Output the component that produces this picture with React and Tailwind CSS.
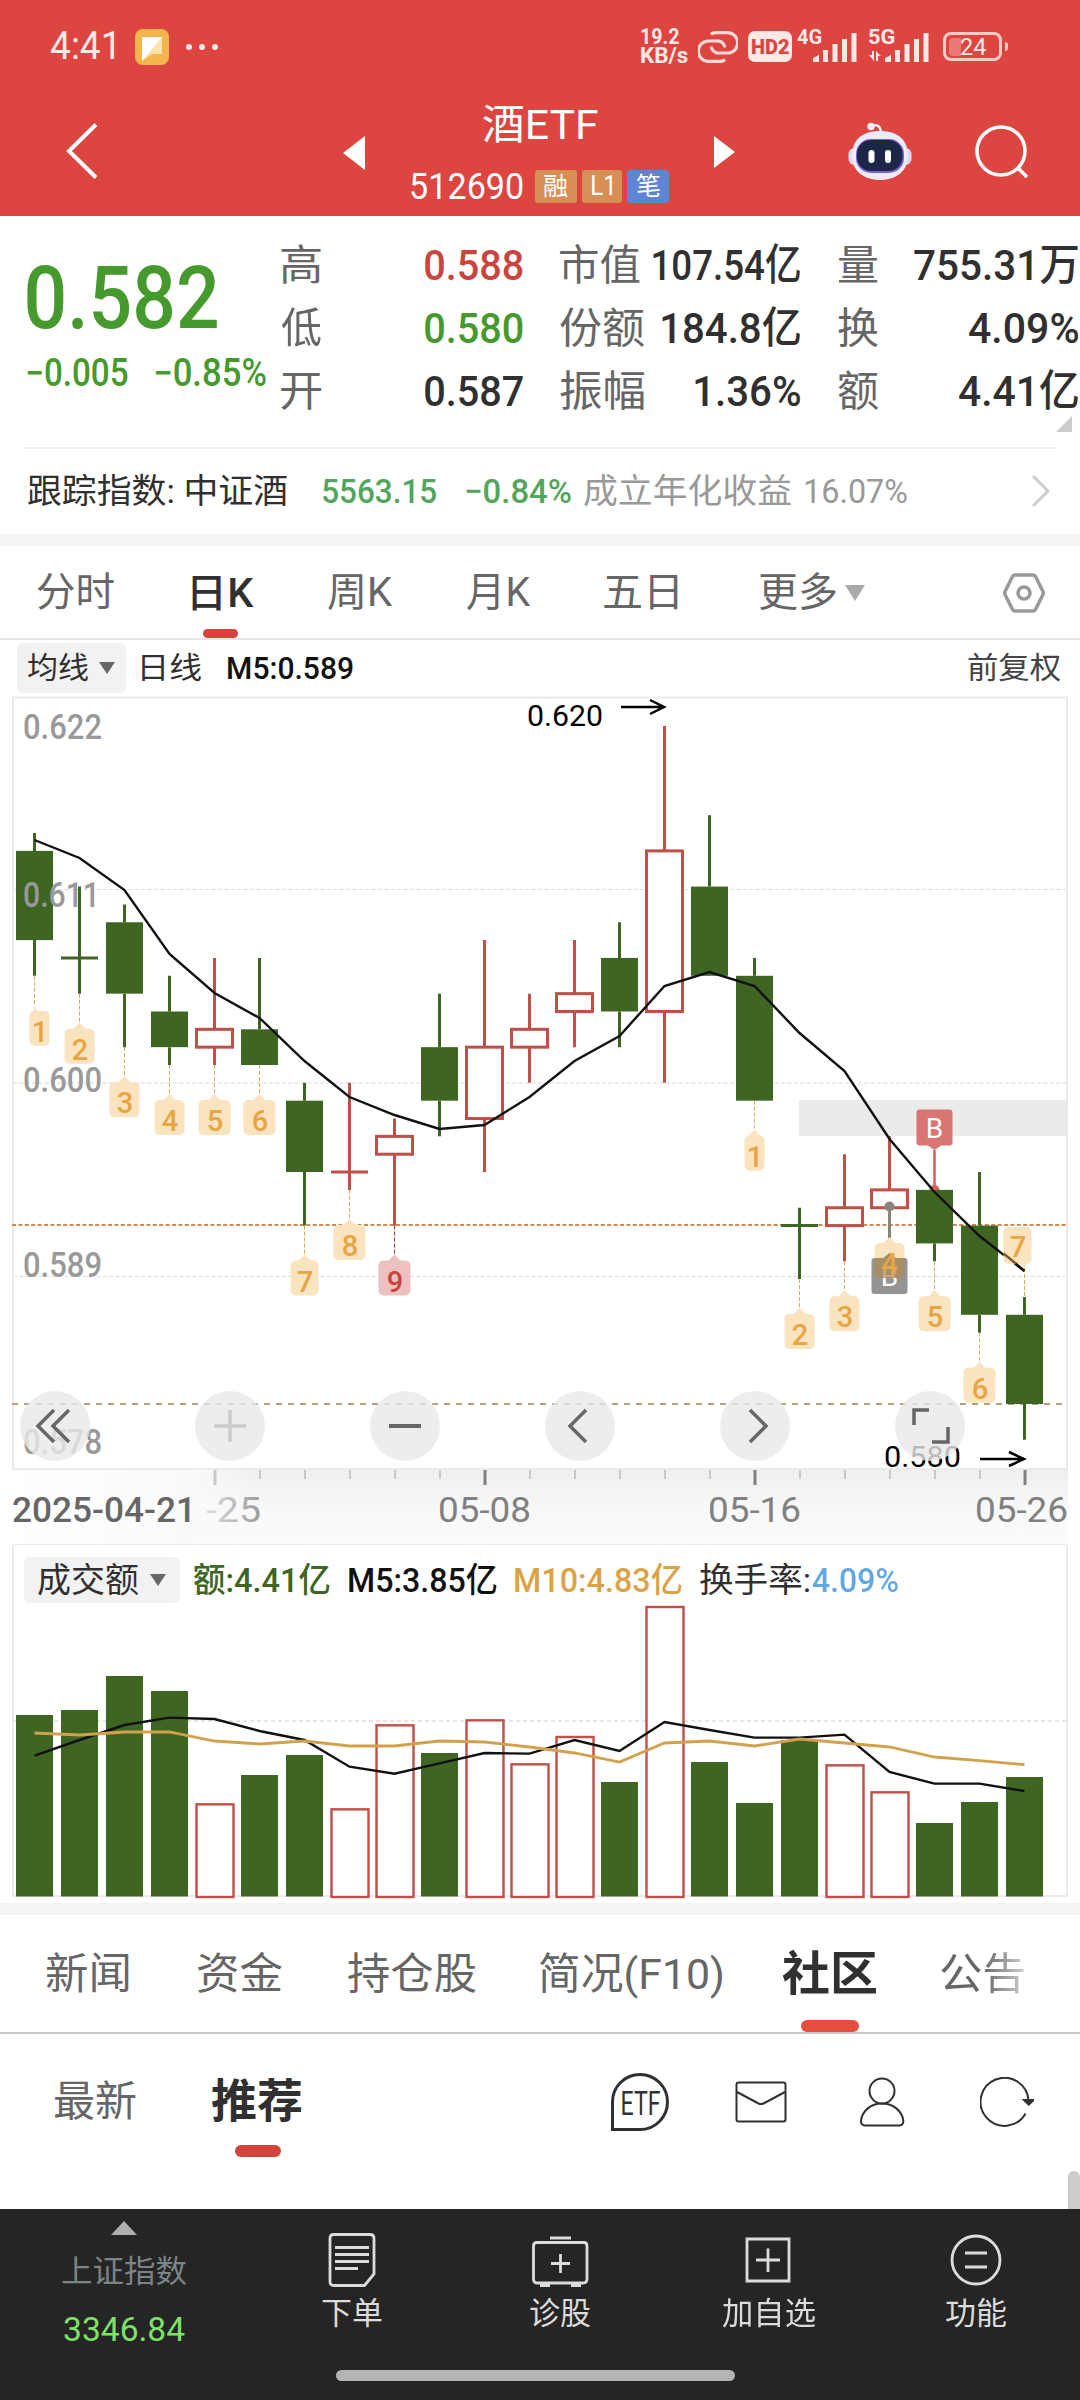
import React, { useLayoutEffect, useRef, useState } from "react";
import clsx from "clsx";

// text squeezed or stretched so that its ink is exactly w pixels wide
const Fit = ({ w, className, children }) => {
  const ref = useRef(null);
  const [style, setStyle] = useState({});

  useLayoutEffect(() => {
    const ctx = document.createElement("canvas").getContext("2d");
    ctx.font = getComputedStyle(ref.current).font;
    const m = ctx.measureText(children);
    const left = -m.actualBoundingBoxLeft;
    const scale = w / (m.actualBoundingBoxRight - left);
    setStyle({ transform: `translateX(${-left * scale}px) scaleX(${scale})` });
  }, [w, children]);

  return (
    <span className={clsx("block shrink-0 whitespace-nowrap leading-none", className)} style={{ width: w }}>
      <span ref={ref} className="inline-block origin-left" style={style}>
        {children}
      </span>
    </span>
  );
};

const GREEN = "#3f6522";
const RED = "#bf4f47";

// open, close, high, low in thousandths, then the turnover bar's top
const candles = [
  [613, 608, 614, 606, 375],
  [607, 607, 611, 605, 360],
  [609, 605, 610, 602, 258],
  [604, 602, 606, 601, 303],
  [602, 603, 607, 601, 640],
  [603, 601, 607, 601, 555],
  [599, 595, 600, 592, 495],
  [595, 595, 600, 594, 655, "up"],
  [596, 597, 598, 592, 403],
  [602, 599, 605, 597, 489],
  [598, 602, 608, 595, 388],
  [602, 603, 605, 600, 520],
  [604, 605, 608, 602, 438],
  [607, 604, 609, 602, 576],
  [604, 613, 620, 600, 48],
  [611, 606, 615, 606, 516],
  [606, 599, 607, 599, 639],
  [592, 592, 593, 589, 450],
  [592, 593, 596, 590, 523],
  [593, 594, 597, 593, 604],
  [594, 591, 594, 590, 699],
  [592, 587, 595, 586, 636],
  [587, 582, 588, 580, 561],
];

const ma5 = [840, 858, 890, 954, 993, 1018, 1061, 1097, 1115, 1129, 1125, 1097, 1061, 1036, 986, 972, 986, 1033, 1071, 1139, 1192, 1236, 1271];
const vol5 = [497, 450, 405, 383, 387, 423, 450, 530, 551, 520, 489, 491, 450, 483, 396, 420, 443, 443, 434, 546, 581, 581, 603];
const vol10 = [429, 435, 426, 426, 453, 462, 453, 468, 468, 453, 456, 471, 489, 516, 459, 453, 468, 447, 459, 471, 501, 512, 524];

// candle index -> running count
const counts = [[0, 1], [1, 2], [2, 3], [3, 4], [4, 5], [5, 6], [6, 7], [7, 8], [8, 9], [16, 1], [17, 2], [18, 3], [20, 5], [21, 6]];

const cx = (i) => 34.5 + i * 45;
const py = (p) => 726 + (620 - p) * 17.842;
const vy = (v) => 1590 + v / 3;
const line = (pts) => pts.map((y, i) => `${cx(i)},${y}`).join(" ");

const Label = ({ x, y, w, size = 35, fill = "#999", weight = 500, children }) => (
  <text x={x} y={y} fontSize={size} fill={fill} fontWeight={weight} textLength={w} lengthAdjust="spacingAndGlyphs">
    {children}
  </text>
);

const Candle = ({ i, d }) => {
  const [o, c, h, l, , dir] = d;
  const up = c > o || dir === "up";
  const top = py(Math.max(o, c));
  const bottom = py(Math.min(o, c));
  const x = cx(i);
  return (
    <g stroke={up ? RED : GREEN} strokeWidth={3}>
      <path d={`M${x} ${py(h)}V${top}M${x} ${bottom}V${py(l)}`} />
      {o === c ? (
        <path d={`M${x - 18.5} ${top}h37`} />
      ) : up ? (
        <rect x={x - 18} y={top} width={36} height={bottom - top} fill="#fff" />
      ) : (
        <rect x={x - 18.5} y={top} width={37} height={bottom - top} fill={GREEN} stroke="none" />
      )}
    </g>
  );
};

const Count = ({ i, n }) => {
  const low = py(candles[i][3]);
  const hw = n === 1 ? 10 : n === 7 ? 14 : n === 5 || n === 6 || n >= 8 ? 16 : 15;
  const x = cx(i);
  const bx = i === 0 ? x + 5 : x;
  const hot = n === 9;
  return (
    <g>
      <path d={`M${x} ${low}v29`} stroke={hot ? "#8f3a34" : "#dba95a"} strokeWidth={1} strokeDasharray="4 2" />
      <g fill={hot ? "#eec1c1" : "#fae3bf"}>
        <path d={i === 0 ? `M${x} ${low + 29}l3 7h-4z` : `M${x} ${low + 29}l7 7h-14z`} />
        <rect x={bx - hw} y={low + 35} width={hw * 2} height={35} rx={5} />
      </g>
      <text x={bx + 0.5} y={low + 66} textAnchor="middle" fontSize={29} fontWeight={500} fill={hot ? "#c9443c" : "#e8a545"}>
        {n}
      </text>
    </g>
  );
};

const PriceChart = () => (
  <svg viewBox="0 696 1080 849" className="block h-[849px] w-[1080px]">
    <defs>
      <linearGradient id="axis" x1="0" y1="0" x2="0" y2="1">
        <stop offset="0" stopColor="#efefef" />
        <stop offset=".6" stopColor="#f9f9f9" />
        <stop offset="1" stopColor="#fbfbfb" />
      </linearGradient>
      <linearGradient id="fade" x1="0" y1="0" x2="1" y2="0">
        <stop offset="0" stopColor="#fff" />
        <stop offset=".7" stopColor="#fafafa" />
        <stop offset="1" stopColor="#fafafa" stopOpacity="0" />
      </linearGradient>
    </defs>
    <path d="M13 889.5H1067M13 1276.5H1067" stroke="#dcdcdc" strokeDasharray="4 2.4" />
    <path d="M13 1083H1067" stroke="#ebebeb" strokeWidth={2} strokeDasharray="4 2.4" />
    <rect x={799} y={1100} width={268} height={36} fill="#ebebeb" />
    <path d="M13 697.5H1067V1469H13z" fill="none" stroke="#ebebeb" strokeWidth={2} />
    <path d="M12 1225H1067" stroke="#cf8a52" strokeWidth={2} strokeDasharray="4 2.4" />
    <path d="M12 1404H1067" stroke="#b5a27c" strokeWidth={2} strokeDasharray="6 6" />

    <circle cx={934.5} cy={1190} r={5} fill="#d4605c" />
    {candles.map((d, i) => (
      <Candle key={i} i={i} d={d} />
    ))}
    <polyline points={line(ma5)} fill="none" stroke="#111" strokeWidth={2.4} />

    <Label x={23} y={738.5} w={79}>0.622</Label>
    <Label x={23} y={907} w={77}>0.611</Label>
    <Label x={23} y={1092} w={79}>0.600</Label>
    <Label x={23} y={1277} w={79}>0.589</Label>
    <Label x={23} y={1454} w={79}>0.578</Label>

    {counts.map(([i, n]) => (
      <Count key={i} i={i} n={n} />
    ))}

    {/* trade marks */}
    <path d="M934.5 1150V1190" stroke="#d4605c" strokeWidth={2.5} />
    <rect x={916.5} y={1109.5} width={36} height={36} rx={3} fill="#d97573" />
    <path d="M927 1145h15l-7.5 5z" fill="#d97573" />
    <text x={934.5} y={1137.5} textAnchor="middle" fontSize={28} fill="#fff">B</text>

    <path d="M889.5 1207V1254" stroke="#8a8378" strokeWidth={3} />
    <circle cx={889.5} cy={1206.5} r={5} fill="#8b8580" />
    <g fill="#fae3bf">
      <path d="M889.5 1237l7 7h-14z" />
      <rect x={874.5} y={1243} width={30} height={35} rx={5} />
    </g>
    <path d="M882 1259h15l-7.5 -6z" fill="#948a7a" />
    <rect x={871.5} y={1258} width={36} height={36} rx={3} fill="#949494" />
    <text x={889.5} y={1286} textAnchor="middle" fontSize={28} fill="#fff">B</text>
    <path d="M874.5 1258h30v15q0 5-5 5h-20q-5 0-5-5z" fill="#b08c55" opacity={0.75} />
    <text x={889.5} y={1273.5} textAnchor="middle" fontSize={29} fontWeight={500} fill="#e8a545">4</text>

    {/* last count hangs above its candle */}
    <path d="M1024.5 1268V1297" stroke="#dba95a" strokeDasharray="4 2" />
    <path d="M1018 1262h10l-3.5 6z" fill="#fae3bf" />
    <rect x={1003.5} y={1227} width={28} height={37} rx={5} fill="#fae3bf" />
    <text x={1018} y={1257} textAnchor="middle" fontSize={29} fontWeight={500} fill="#e8a545">7</text>
    <path d="M1003.5 1253.5L1017 1264.500" stroke="#7a5c2c" strokeWidth={2.4} />
    <path d="M1016 1264L1024.500 1271" stroke="#111" strokeWidth={2.4} />

    <Label x={527} y={726} w={76} size={30} fill="#000" weight={400}>0.620</Label>
    <Label x={884} y={1466.5} w={77} size={30} fill="#000" weight={400}>0.580</Label>
    <g fill="none" stroke="#000" strokeWidth={2.5}>
      <path d="M621 707H664M650 700L664 707L650 714" />
      <path d="M980 1459H1024M1009 1452L1024 1459L1009 1466" />
    </g>

    {/* time axis */}
    <rect x={13} y={1470} width={1055} height={74} fill="url(#axis)" />
    <Label x={206} y={1522} w={55} fill="#999" weight={400}>-25</Label>
    <rect x={0} y={1470} width={262} height={74} fill="url(#fade)" />
    <path d="M13 1545H1067" stroke="#ebebeb" strokeWidth={2} />
    {candles.map((_, i) => {
      if (i < 4) return null;
      const major = i % 6 === 4;
      return (
        <path
          key={i}
          d={`M${cx(i) + 0.5} 1470v${major ? 15 : 9}`}
          stroke={major && i > 4 ? "#808080" : "#c8c8c8"}
          strokeWidth={major ? 3 : 2}
        />
      );
    })}
    <Label x={12} y={1522} w={184} fill="#666">2025-04-21</Label>
    <Label x={438} y={1522} w={93} fill="#808080" weight={400}>05-08</Label>
    <Label x={708} y={1522} w={93} fill="#808080" weight={400}>05-16</Label>
    <Label x={975} y={1522} w={93} fill="#808080" weight={400}>05-26</Label>
  </svg>
);

const VolumeChart = () => (
  <svg viewBox="0 1603 1080 300" className="block h-[300px] w-[1080px]">
    <path d="M12 1721H1067" stroke="#e6e6e6" strokeWidth={2} strokeDasharray="4 3" />
    <path d="M13 1603V1896H1067V1603" fill="none" stroke="#ebebeb" strokeWidth={2} />
    {candles.map(([o, c, , , v, dir], i) => {
      const up = c > o || dir === "up";
      const y = vy(v);
      return up ? (
        <rect key={i} x={cx(i) - 18} y={y + 1} width={37} height={1896 - y} fill="#fff" stroke={RED} strokeWidth={2.4} />
      ) : (
        <rect key={i} x={cx(i) - 18.5} y={y} width={37} height={1896.5 - y} fill={GREEN} />
      );
    })}
    <polyline points={line(vol5.map(vy))} fill="none" stroke="#111" strokeWidth={2.4} />
    <polyline points={line(vol10.map(vy))} fill="none" stroke="#d3a14c" strokeWidth={2.8} />
  </svg>
);

const Signal = ({ data }) => (
  <svg viewBox="0 0 60 32" className="h-[32px] w-[60px]" fill="#ffe9e7">
    <path d="M16 31v-4l6-3v7zM26 31V19h5v12zM35.5 31V13h5v18zM45 31V8h5v23zM54.5 31V2h5v29z" />
    {data && <path d="M0 24h3v-4h2v10zM7 30V20l5 5h-3v5z" />}
  </svg>
);

const StatusBar = () => (
  <div className="flex h-[93px] items-center pl-[51px] text-[#ffe9e7]">
    <Fit w={63} className="text-[39px]">4:41</Fit>
    <svg viewBox="0 0 34 36" className="ml-[21px] h-[36px] w-[34px]">
      <rect width={34} height={36} rx={8} fill="#f3b64f" />
      <path d="M7 8h20v17H17l-10 7z" fill="#ffe3a8" />
      <path d="M7 8h20L7 32z" fill="#fff" />
    </svg>
    <div className="ml-[17px] flex gap-[7px]">
      <i className="size-[6px] rounded-full bg-[#ffe9e7]" />
      <i className="size-[6px] rounded-full bg-[#ffe9e7]" />
      <i className="size-[6px] rounded-full bg-[#ffe9e7]" />
    </div>
    <div className="ml-[423px]">
      <Fit w={38} className="h-[19px] text-[22px] font-bold">19.2</Fit>
      <Fit w={47} className="text-[22px] font-bold">KB/s</Fit>
    </div>
    <svg viewBox="0 0 40 32" className="ml-[10px] h-[32px] w-[40px]" fill="none" stroke="#ffd9d6" strokeWidth={3.2} strokeLinecap="round">
      <path d="M13.500 17a8 8 0 0 0 8 5h8a9.500 9.500 0 0 0 0-20.300h-11q-3 0-4.500 1" />
      <path d="M26.500 15a8 8 0 0 0-8-5h-8a9.500 9.500 0 0 0 0 20.300h11q3 0 4.500-1" />
    </svg>
    <div className="ml-[10px] flex h-[31px] w-[44px] items-center justify-center rounded-[7px] bg-[#ffe9e7] text-[#dd4540]">
      <Fit w={37} className="text-[20px] font-black">HD2</Fit>
    </div>
    <div className="ml-[5px] flex items-center">
      <Fit w={25} className="mb-[19px] text-[21px] font-bold">4G</Fit>
      <div className="-ml-[25px]"><Signal /></div>
    </div>
    <div className="ml-[12px] flex items-center">
      <Fit w={26} className="mb-[19px] text-[21px] font-bold">5G</Fit>
      <div className="-ml-[26px]"><Signal data /></div>
    </div>
    <div className="ml-[14px] flex h-[29px] w-[59px] items-center rounded-[8px] border-[3px] border-[#ffc9c6] pl-[3px]">
      <i className="h-[18px] w-[12px] rounded-l-[4px] bg-[#e87975]" />
      <Fit w={25} className="text-[24px]">24</Fit>
    </div>
    <i className="ml-[3px] h-[9px] w-[3px] rounded-r bg-[#ffc9c6]" />
  </div>
);

const Robot = () => (
  <svg viewBox="0 0 64 60" className="h-[60px] w-[64px]">
    <path d="M24 5q8-3 9 6" fill="none" stroke="#eef" strokeWidth={2.5} />
    <circle cx={23} cy={5.500} r={3.700} fill="#f0ecf6" />
    <rect x={0.5} y={27} width={63} height={17} rx={6} fill="#dcd7f3" />
    <path d="M32 10c19 0 28 10 28 25S48 59 32 59 4 50 4 35s9-25 28-25z" fill="#eeeafa" />
    <rect x={8} y={18} width={48} height={34} rx={15} fill="#6f63d8" />
    <rect x={9} y={19} width={45.5} height={31} rx={14} fill="#1d2646" />
    <rect x={20.5} y={29} width={6} height={13} rx={3} fill="#fff" />
    <rect x={37} y={29} width={6} height={13} rx={3} fill="#fff" />
  </svg>
);

const Header = () => (
  <header className="h-[216px] bg-[#dd4540] text-white">
    <StatusBar />
    <div className="flex h-[122px] items-start">
      <svg viewBox="0 0 32 56" className="mt-[30px] ml-[66px] h-[56px] w-[32px]" fill="none" stroke="#fff" strokeWidth={4}>
        <path d="M30 1.500L3 28L30 54.500" />
      </svg>
      <svg viewBox="0 0 22 34" className="mt-[43px] ml-[245px] h-[34px] w-[22px]" fill="#fff">
        <path d="M22 0v34L0 17z" />
      </svg>
      <div className="ml-[46px] w-[258px]">
        <div className="flex h-[64px] items-center justify-center">
          <Fit w={115} className="text-[41px]">酒ETF</Fit>
        </div>
        <div className="mt-[13px] flex h-[33px] items-center text-[27px]">
          <Fit w={112} className="text-[36px]">512690</Fit>
          <span className="ml-[12px] flex h-[33px] w-[42px] items-center justify-center rounded-[3px] bg-[#d68f55]">
            <Fit w={24} className="text-[25px]">融</Fit>
          </span>
          <span className="ml-[5px] flex h-[33px] w-[40px] items-center justify-center rounded-[3px] bg-[#d68f55]">
            <Fit w={20}>L1</Fit>
          </span>
          <span className="ml-[5px] flex h-[33px] w-[42px] items-center justify-center rounded-[3px] bg-[#5f84d6]">
            <Fit w={24} className="text-[25px]">笔</Fit>
          </span>
        </div>
      </div>
      <svg viewBox="0 0 21 32" className="mt-[43px] ml-[45px] h-[32px] w-[21px]" fill="#fff">
        <path d="M0 0v32L21 16z" />
      </svg>
      <div className="mt-[28px] ml-[113px]"><Robot /></div>
      <svg viewBox="0 0 54 54" className="mt-[32px] ml-[63px] h-[54px] w-[54px]" fill="none" stroke="#fff" strokeWidth={3.5}>
        <circle cx={26} cy={26} r={24} />
        <path d="M43 43l9 9" />
      </svg>
    </div>
  </header>
);

const Stat = ({ label, lw, value, vw, color }) => (
  <div className="flex h-[63px] items-center justify-between">
    <Fit w={lw} className="text-[42px] text-[#666]">{label}</Fit>
    <Fit w={vw} className={clsx("text-[43px] font-medium", color || "text-[#303030]")}>{value}</Fit>
  </div>
);

const Quote = () => (
  <section className="h-[318px]">
    <div className="relative flex h-[231px]">
      <div className="w-[281px] pt-[38px] pl-[27px] font-medium text-[#46992c]">
        <Fit w={190} className="text-[88px]">0.582</Fit>
        <div className="mt-[12px] flex gap-[27px] text-[38px]">
          <Fit w={101}>−0.005</Fit>
          <Fit w={111}>−0.85%</Fit>
        </div>
      </div>
      <div className="w-[242px] pt-[18px]">
        <Stat label="高" lw={40} value="0.588" vw={98} color="text-[#c9463f]" />
        <Stat label="低" lw={40} value="0.580" vw={98} color="text-[#46992c]" />
        <Stat label="开" lw={40} value="0.587" vw={98} />
      </div>
      <div className="ml-[37px] w-[240px] pt-[18px]">
        <Stat label="市值" lw={80} value="107.54亿" vw={147} />
        <Stat label="份额" lw={84} value="184.8亿" vw={138} />
        <Stat label="振幅" lw={84} value="1.36%" vw={105} />
      </div>
      <div className="ml-[38px] w-[240px] pt-[18px]">
        <Stat label="量" lw={40} value="755.31万" vw={164} />
        <Stat label="换" lw={40} value="4.09%" vw={109} />
        <Stat label="额" lw={40} value="4.41亿" vw={119} />
      </div>
      <svg viewBox="0 0 16 16" className="absolute right-[8px] bottom-[15px] size-[16px]" fill="#ccc">
        <path d="M16 0v16H0z" />
      </svg>
    </div>
    <div className="mx-[23px] flex h-[85px] items-center border-t-2 border-[#eee] pl-[5px] text-[34px]">
      <Fit w={259} className="text-[#303030]">跟踪指数: 中证酒</Fit>
      <Fit w={113} className="ml-[36px] font-medium text-[#53a55c]">5563.15</Fit>
      <Fit w={105} className="ml-[30px] font-medium text-[#53a55c]">−0.84%</Fit>
      <Fit w={207} className="ml-[13px] text-[#999]">成立年化收益</Fit>
      <Fit w={102} className="ml-[14px] text-[#999]">16.07%</Fit>
      <svg viewBox="0 0 18 32" className="ml-[125px] h-[32px] w-[18px]" fill="none" stroke="#ccc" strokeWidth={3}>
        <path d="M1 1L16 16L1 31" />
      </svg>
    </div>
  </section>
);

const PeriodTabs = () => (
  <nav className="flex h-[94px] items-center border-b-2 border-[#e6e6e6] pt-[2px] pl-[37px] text-[40px] text-[#666]">
    <Fit w={77}>分时</Fit>
    <div className="ml-[78px] flex h-full flex-col justify-between pt-[26px]">
      <Fit w={62} className="font-medium text-[#303030]">日K</Fit>
      <i className="ml-[11px] h-[9px] w-[35px] rounded-full bg-[#d4443b]" />
    </div>
    <Fit w={65} className="ml-[74px]">周K</Fit>
    <Fit w={64} className="ml-[74px]">月K</Fit>
    <Fit w={74} className="ml-[73px]">五日</Fit>
    <Fit w={77} className="ml-[81px]">更多</Fit>
    <svg viewBox="0 0 20 16" className="ml-[9px] h-[16px] w-[20px]" fill="#aaa">
      <path d="M0 0h20L10 16z" />
    </svg>
    <svg viewBox="0 0 42 40" className="ml-[138px] h-[40px] w-[42px]" fill="none" stroke="#999" strokeWidth={3.5} strokeLinejoin="round">
      <path d="M12 2h18q1.500 0 2.500 1.500L40 18.500q.5 1.500 0 3L32.500 36.500Q31.500 38 30 38H12q-1.500 0-2.500-1.500L2 21.500q-.5-1.500 0-3L9.500 3.500Q10.500 2 12 2z" />
      <circle cx={21} cy={20} r={6} />
    </svg>
  </nav>
);

const Drop = () => (
  <svg viewBox="0 0 16 12" className="ml-[11px] h-[12px] w-[16px]" fill="#666">
    <path d="M0 0h16L8 12z" />
  </svg>
);

const RoundButton = ({ light, children }) => (
  <button className="flex size-[70px] items-center justify-center rounded-full bg-[#e9e9e9]/80">
    <svg viewBox="0 0 40 40" className="size-[40px]" fill="none" stroke={light ? "#ccc" : "#666"} strokeWidth={3.5}>
      {children}
    </svg>
  </button>
);

const KLine = () => (
  <section>
    <div className="flex h-[56px] items-center pl-[17px] text-[30px]">
      <div className="flex h-[50px] w-[109px] items-center rounded-[6px] bg-[#f2f2f2] pl-[11px] text-[#303030]">
        <Fit w={60}>均线</Fit>
        <Drop />
      </div>
      <Fit w={59} className="ml-[16px] text-[#303030]">日线</Fit>
      <Fit w={125} className="ml-[27px] text-[32px] font-medium text-[#111]">M5:0.589</Fit>
      <Fit w={93} className="ml-[615px] text-[#444]">前复权</Fit>
    </div>
    <div className="relative">
      <PriceChart />
      <div className="absolute top-[695px] left-[20px] flex gap-[105px]">
        <RoundButton><path d="M19 4L3 20L19 36M34 4L18 20L34 36" /></RoundButton>
        <RoundButton light><path d="M4 20H36M20 4V36" /></RoundButton>
        <RoundButton><path d="M4 20H36" strokeWidth={4} /></RoundButton>
        <RoundButton><path d="M26 4L10 20L26 36" /></RoundButton>
        <RoundButton><path d="M15 4L31 20L15 36" /></RoundButton>
        <RoundButton><path d="M4 19V4H19M38 21V36H22" /></RoundButton>
      </div>
    </div>
  </section>
);

const Turnover = () => (
  <section>
    <div className="mx-[12px] flex h-[58px] items-end border-x-2 border-[#ebebeb] text-[34px]">
      <div className="flex h-[46px] w-full items-center pl-[10px]">
        <div className="flex h-[46px] w-[156px] items-center rounded-[6px] bg-[#f2f2f2] pl-[14px] text-[#303030]">
          <Fit w={101}>成交额</Fit>
          <Drop />
        </div>
        <Fit w={136} className="ml-[14px] font-medium text-[#3f6522]">额:4.41亿</Fit>
        <Fit w={148} className="ml-[19px] font-medium text-[#111]">M5:3.85亿</Fit>
        <Fit w={167} className="ml-[18px] font-medium text-[#d9a347]">M10:4.83亿</Fit>
        <Fit w={110} className="ml-[18px] text-[#303030]">换手率:</Fit>
        <Fit w={86} className="ml-[2px] font-medium text-[#62a8e2]">4.09%</Fit>
      </div>
    </div>
    <VolumeChart />
  </section>
);

const InfoTabs = () => (
  <nav className="flex h-[119px] items-center border-b-2 border-[#c8c8c8] pt-[2px] pl-[46px] text-[43px] text-[#666]">
    <Fit w={83}>新闻</Fit>
    <Fit w={84} className="ml-[69px]">资金</Fit>
    <Fit w={128} className="ml-[66px]">持仓股</Fit>
    <Fit w={182} className="ml-[64px]">简况(F10)</Fit>
    <div className="ml-[60px] flex h-full flex-col items-center justify-between pt-[33px]">
      <Fit w={95} className="text-[47px] font-bold text-[#303030]">社区</Fit>
      <i className="h-[12px] w-[58px] rounded-full bg-[#e54d3f]" />
    </div>
    <div className="ml-[64px] h-[60px] pt-[8px] [mask-image:linear-gradient(to_right,#000_50%,#0005)]">
      <Fit w={83}>公告</Fit>
    </div>
  </nav>
);

const Community = () => (
  <section className="flex h-[175px] items-start pl-[54px] text-[#666]">
    <Fit w={82} className="mt-[47px] text-[42px]">最新</Fit>
    <div className="ml-[76px] flex h-[123px] flex-col items-center justify-between pt-[44px]">
      <Fit w={89} className="text-[46px] font-bold text-[#303030]">推荐</Fit>
      <i className="ml-[2px] h-[12px] w-[46px] rounded-full bg-[#d4443b]" />
    </div>
    <div className="mt-[38px] ml-[310px] flex h-[60px] items-center">
      <svg viewBox="0 0 58 58" className="size-[58px]" fill="none" stroke="#303030" strokeWidth={3}>
        <path d="M1.500 56.500V29A27.500 27.500 0 1 1 29 56.500z" />
        <text x={9.5} y={42} fontSize={34} fill="#303030" stroke="none" textLength={40} lengthAdjust="spacingAndGlyphs">ETF</text>
      </svg>
      <svg viewBox="0 0 52 42" className="ml-[66px] h-[42px] w-[52px]" fill="none" stroke="#303030" strokeWidth={2}>
        <rect x={1.5} y={1.5} width={49} height={39} rx={2} />
        <path d="M2 11L23.500 22.500q2.500 1 5 0L50 11" />
      </svg>
      <svg viewBox="0 0 46 50" className="ml-[72px] h-[50px] w-[46px]" fill="none" stroke="#303030" strokeWidth={2}>
        <circle cx={23} cy={14} r={12.5} />
        <path d="M23 26.500c12 0 20 8 21.300 17 .3 3-1.300 5-4 5H6c-2.700 0-4.300-2-4-5C3.300 34.500 11 26.500 23 26.500z" />
      </svg>
      <svg viewBox="0 0 54 50" className="ml-[75px] h-[50px] w-[54px]" fill="none" stroke="#303030" strokeWidth={2}>
        <path d="M45.500 36.500A24 24 0 1 1 48.500 24" />
        <path d="M44 23h9.500l-4.700 4.500z" fill="#303030" />
      </svg>
    </div>
  </section>
);

const NavItem = ({ label, w, children }) => (
  <div className="flex w-[208px] flex-col items-center text-[31px] text-[#dcdcdc]">
    <svg viewBox="0 0 60 60" className="mt-[21px] size-[60px]" fill="none" stroke="#dcdcdc" strokeWidth={2.8}>
      {children}
    </svg>
    <Fit w={w} className="mt-[8px]">{label}</Fit>
  </div>
);

const BottomBar = () => (
  <footer className="h-[191px] bg-[#252525]">
    <div className="flex h-[161px]">
      <div className="flex w-[248px] flex-col items-center pt-[12px]">
        <svg viewBox="0 0 26 14" className="h-[14px] w-[26px]" fill="#b0b0b0">
          <path d="M13 0L26 14H0z" />
        </svg>
        <Fit w={125} className="mt-[21px] text-[31px] text-[#7c8487]">上证指数</Fit>
        <Fit w={121} className="mt-[25px] text-[34px] text-[#7ce364]">3346.84</Fit>
      </div>
      <NavItem label="下单" w={60}>
        <path d="M12 4.500H48Q52 4.500 52 8.500V44L42.500 55.500H12Q8 55.500 8 51.500V8.500Q8 4.500 12 4.500zM13 17.500H47M13 24.500H47M13 31.500H47M13 38.500H36" />
      </NavItem>
      <NavItem label="诊股" w={60}>
        <path d="M20 8H41M7 12.500H54Q57 12.500 57 16V49Q57 53 53 53H7Q3.500 53 3.500 49V16Q3.500 12.500 7 12.500zM30.500 24V43M21 33.500H40M10 55.500H20M41 55.500H51" />
      </NavItem>
      <NavItem label="加自选" w={93}>
        <path d="M9 9H51V51H9zM30 18.500V42M18 30H42" />
      </NavItem>
      <NavItem label="功能" w={60}>
        <circle cx={30} cy={30} r={24} />
        <path d="M19 23H41M19 37H41" />
      </NavItem>
    </div>
    <div className="ml-[336px] h-[11px] w-[399px] rounded-full bg-[#b4b4b4]" />
  </footer>
);

const App = () => {
  return (
    <div className="h-[2400px] w-[1080px] overflow-hidden bg-white font-['Roboto','Noto_Sans_CJK_SC',sans-serif]">
      <Header />
      <Quote />
      <div className="h-[12px] bg-[#f4f4f4]" />
      <PeriodTabs />
      <KLine />
      <Turnover />
      <div className="h-[12px] bg-[#f4f4f4]" />
      <InfoTabs />
      <Community />
      {/* scroll thumb */}
      <div className="-mt-[38px] flex h-[38px] justify-end">
        <i className="w-[12px] rounded-t-full bg-[#ccc]" />
      </div>
      <BottomBar />
    </div>
  );
};

export default App;
